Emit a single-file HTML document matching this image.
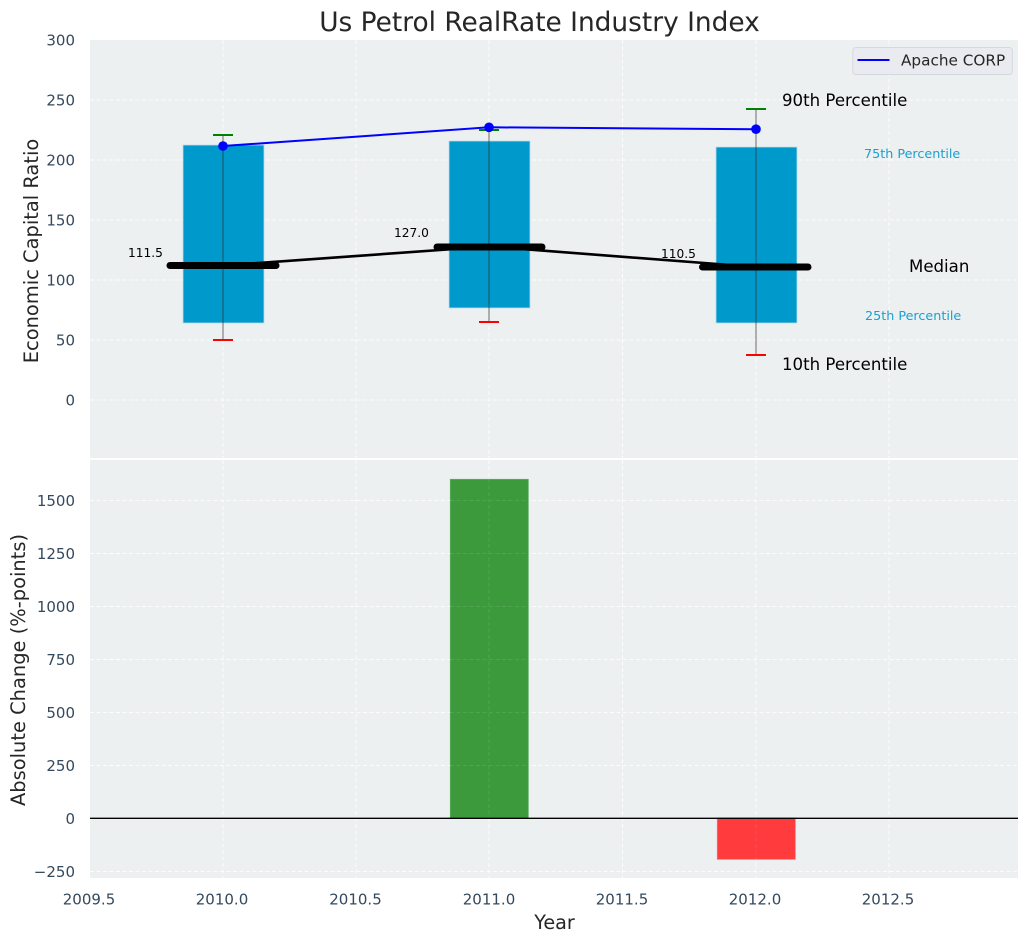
<!DOCTYPE html>
<html><head><meta charset="utf-8"><style>html,body{margin:0;padding:0;background:#fff}svg{display:block}text{font-family:"DejaVu Sans","Liberation Sans",sans-serif}</style></head><body>
<svg width="1029" height="942" viewBox="0 0 1029 942" xmlns="http://www.w3.org/2000/svg">
<rect width="1029" height="942" fill="#fff"/>
<rect x="90" y="40" width="928" height="418" fill="#ecf0f1"/>
<rect x="90" y="460" width="928" height="418" fill="#ecf0f1"/>
<g stroke="#fff" stroke-width="1" stroke-dasharray="4,2.5" fill="none" opacity=".85">
<path d="M223 40V458M356 40V458M489 40V458M622.500 40V458M756 40V458M889 40V458"/>
<path d="M90 100H1018M90 160H1018M90 220H1018M90 280H1018M90 340H1018M90 400H1018"/>
<path d="M223 460V878M356 460V878M489 460V878M622.500 460V878M756 460V878M889 460V878"/>
<path d="M90 500.500H1018M90 553.500H1018M90 606.500H1018M90 659.500H1018M90 712.500H1018M90 765.500H1018M90 871.500H1018"/>
</g>
<g fill="#0099cc" stroke="#bcdde9" stroke-width=".8">
<rect x="183" y="145" width="81" height="178"/>
<rect x="449" y="141" width="81" height="167"/>
<rect x="716" y="147" width="81" height="176"/>
</g>
<g stroke="#333" stroke-opacity=".55" stroke-width="1.300" fill="none">
<path d="M223 135V340M489 130V322M756 109V355"/>
</g>
<g stroke-width="2" fill="none">
<path stroke="#008000" d="M213 135H233M479 130H499M746 109H766"/>
<path stroke="#ff0000" d="M213 340H233M479 322H499M746 355H766"/>
</g>
<path d="M223 265.500L489 246.500L756 267" stroke="#000" stroke-width="2.600" fill="none"/>
<g stroke="#000" stroke-width="7" stroke-linecap="round" fill="none">
<path d="M170 265.500H276M437 247H542M702.500 267H808"/>
</g>
<path d="M223 146L489 127.300L756 129.200" stroke="#0000ff" stroke-width="2" fill="none"/>
<g fill="#0000ff"><circle cx="223" cy="146" r="4.800"/><circle cx="489" cy="127.300" r="4.800"/><circle cx="756" cy="129.200" r="4.800"/></g>
<rect x="450.300" y="479.300" width="78" height="338.700" fill="#3c9a3c" stroke="#5fae5f" stroke-width=".8"/>
<rect x="717.300" y="818" width="78" height="41.300" fill="#ff3b3e" stroke="#ff6c6e" stroke-width=".8"/>
<path d="M489 479V818M450 500.500H528M450 553.500H528M450 606.500H528M450 659.500H528M450 712.500H528M450 765.500H528M756 818V859" stroke="#fff" stroke-width="1" stroke-dasharray="4,2.5" opacity=".1" fill="none"/>
<path d="M90 818.300H1018" stroke="#000" stroke-width="1.300"/>
<rect x="90" y="458" width="928" height="2" fill="#fff"/>
<rect x="852.800" y="47.500" width="159.500" height="27" rx="3" fill="#e9ebf0" stroke="#d5d8de" stroke-width="1"/>
<path d="M857.500 60H889.500" stroke="#0000ff" stroke-width="2"/>
<text x="901" y="65.500" font-size="15.250" fill="#262626">Apache CORP</text>
<text x="539.500" y="31" font-size="26.400" fill="#262626" text-anchor="middle">Us Petrol RealRate Industry Index</text>
<g font-size="15" fill="#34495e" text-anchor="end">
<text x="75" y="45.500">300</text><text x="75" y="105.500">250</text><text x="75" y="165.500">200</text><text x="75" y="225.500">150</text><text x="75" y="285.500">100</text><text x="75" y="345.500">50</text><text x="75" y="405.500">0</text>
<text x="75" y="506">1500</text><text x="75" y="559">1250</text><text x="75" y="612">1000</text><text x="75" y="665">750</text><text x="75" y="718">500</text><text x="75" y="771">250</text><text x="75" y="824">0</text><text x="75" y="877">−250</text>
</g>
<g font-size="15" fill="#34495e" text-anchor="middle">
<text x="89" y="904.500">2009.5</text><text x="222" y="904.500">2010.0</text><text x="355.500" y="904.500">2010.5</text><text x="489" y="904.500">2011.0</text><text x="622" y="904.500">2011.5</text><text x="755" y="904.500">2012.0</text><text x="888" y="904.500">2012.5</text>
</g>
<text x="554.500" y="929" font-size="19.200" fill="#262626" text-anchor="middle">Year</text>
<text transform="translate(38,251) rotate(-90)" font-size="19.440" fill="#262626" text-anchor="middle">Economic Capital Ratio</text>
<text transform="translate(25,670) rotate(-90)" font-size="19.440" fill="#262626" text-anchor="middle">Absolute Change (%-points)</text>
<g font-size="12.200" fill="#000">
<text x="128" y="257">111.5</text><text x="394" y="237">127.0</text><text x="661" y="258">110.5</text>
</g>
<g font-size="16.600" fill="#000">
<text x="782" y="106">90th Percentile</text><text x="782" y="370">10th Percentile</text><text x="909" y="272">Median</text>
</g>
<g font-size="12.750" fill="#1a9fd0">
<text x="864" y="158">75th Percentile</text><text x="865" y="320">25th Percentile</text>
</g>
</svg>
</body></html>
